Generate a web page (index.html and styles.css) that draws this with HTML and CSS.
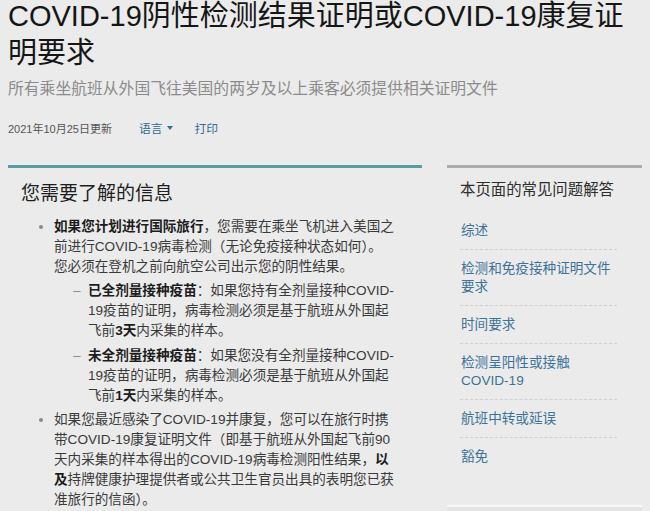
FILE: index.html
```html
<!DOCTYPE html>
<html lang="zh-CN">
<head>
<meta charset="utf-8">
<title>COVID-19阴性检测结果证明或COVID-19康复证明要求</title>
<link rel="stylesheet" href="styles.css">
</head>
<body>
<header class="page-header">
  <h1 class="title">COVID-19阴性检测结果证明或COVID-19康复证明要求</h1>
  <p class="subtitle">所有乘坐航班从外国飞往美国的两岁及以上乘客必须提供相关证明文件</p>
  <div class="meta">
    <span class="date">2021年10月25日更新</span>
    <a class="meta-link lang" href="#">语言<span class="caret"></span></a>
    <a class="meta-link print" href="#">打印</a>
  </div>
</header>
<div class="columns">
  <main class="main">
    <h2 class="section-title">您需要了解的信息</h2>
    <ul class="info-list">
      <li><strong>如果您计划进行国际旅行</strong>，您需要在乘坐飞机进入美国之<br>前进行COVID-19病毒检测（无论免疫接种状态如何）。<br>您必须在登机之前向航空公司出示您的阴性结果。
        <ul class="sub-list">
          <li><strong>已全剂量接种疫苗</strong>：如果您持有全剂量接种COVID-<br>19疫苗的证明，病毒检测必须是基于航班从外国起<br>飞前<strong>3天</strong>内采集的样本。</li>
          <li><strong>未全剂量接种疫苗</strong>：如果您没有全剂量接种COVID-<br>19疫苗的证明，病毒检测必须是基于航班从外国起<br>飞前<strong>1天</strong>内采集的样本。</li>
        </ul>
      </li>
      <li>如果您最近感染了COVID-19并康复，您可以在旅行时携<br>带COVID-19康复证明文件（即基于航班从外国起飞前90<br>天内采集的样本得出的COVID-19病毒检测阳性结果，<strong>以<br>及</strong>持牌健康护理提供者或公共卫生官员出具的表明您已获<br>准旅行的信函）。</li>
    </ul>
  </main>
  <aside class="side">
    <h3 class="side-title">本页面的常见问题解答</h3>
    <ul class="faq-list">
      <li><a href="#">综述</a></li>
      <li><a href="#">检测和免疫接种证明文件要求</a></li>
      <li><a href="#">时间要求</a></li>
      <li><a href="#">检测呈阳性或接触<span class="nowrap">COVID-19</span></a></li>
      <li><a href="#">航班中转或延误</a></li>
      <li><a href="#">豁免</a></li>
    </ul>
    <div class="side-next"></div>
  </aside>
</div>
</body>
</html>
```

FILE: styles.css
```css
html {
  overflow: hidden;
  background: #ebebeb;
}
body {
  margin: 0 8px;
  background: #ebebeb;
  font-family: "Liberation Sans", "Noto Sans CJK SC", sans-serif;
  color: #333;
}
.title {
  margin: -2px 0 0;
  font-size: 29px;
  line-height: 37px;
  font-weight: 400;
  color: #161616;
}
.subtitle {
  margin: 6px 0 0;
  font-size: 15.8px;
  line-height: 22px;
  color: #8b8b8b;
}
.meta {
  margin-top: 18px;
  display: flex;
  align-items: center;
  height: 19px;
}
.date {
  font-size: 11px;
  color: #555;
}
.meta-link {
  font-size: 11.8px;
  color: #2f6e98;
  text-decoration: none;
}
.lang {
  margin-left: 27px;
  display: flex;
  align-items: center;
}
.caret {
  display: inline-block;
  margin-left: 4px;
  width: 0;
  height: 0;
  border-top: 4px solid #2f6e98;
  border-left: 3.5px solid transparent;
  border-right: 3.5px solid transparent;
}
.print {
  margin-left: 22px;
}
.columns {
  margin-top: 28px;
  display: flex;
  gap: 25px;
  align-items: flex-start;
}
.main {
  width: 414px;
  flex: none;
  border-top: 3px solid #5b99a7;
  padding: 0 13px;
  box-sizing: border-box;
}
.section-title {
  margin: 13px 0 0;
  font-size: 19px;
  line-height: 26px;
  font-weight: 400;
  color: #1e1e1e;
}
.info-list {
  margin: 10px 0 0;
  padding-left: 33px;
  font-size: 13.6px;
  line-height: 20px;
  color: #3a3a3a;
}
.info-list > li + li {
  margin-top: 4px;
}
.info-list li::marker {
  color: #8a8a8a;
}
.info-list strong {
  color: #1c1c1c;
}
.sub-list {
  margin: 4px 0 0;
  padding-left: 34px;
  list-style-type: "\2013\00a0\00a0";
}
.sub-list > li + li {
  margin-top: 5px;
}
.side {
  width: 195px;
  flex: none;
  border-top: 3px solid #acacac;
  padding: 0 25px 0 13px;
  box-sizing: border-box;
}
.side-title {
  margin: 11px 0 0;
  font-size: 15.4px;
  line-height: 22px;
  font-weight: 400;
  color: #2e2e2e;
}
.faq-list {
  margin: 11px 0 0;
  padding: 0;
  list-style: none;
  font-size: 13.6px;
  line-height: 18px;
}
.faq-list li {
  padding: 9.5px 0 9.5px 1px;
  border-bottom: 1px dashed #cfcfcf;
}
.faq-list li:last-child {
  border-bottom: none;
}
.faq-list a {
  color: #3d7399;
  text-decoration: none;
}
.nowrap {
  white-space: nowrap;
}
.side-next {
  margin: 30px -25px 0 -13px;
  height: 20px;
  border-top: 2px solid #f7f7f7;
  background: #e4e4e4;
}
```
